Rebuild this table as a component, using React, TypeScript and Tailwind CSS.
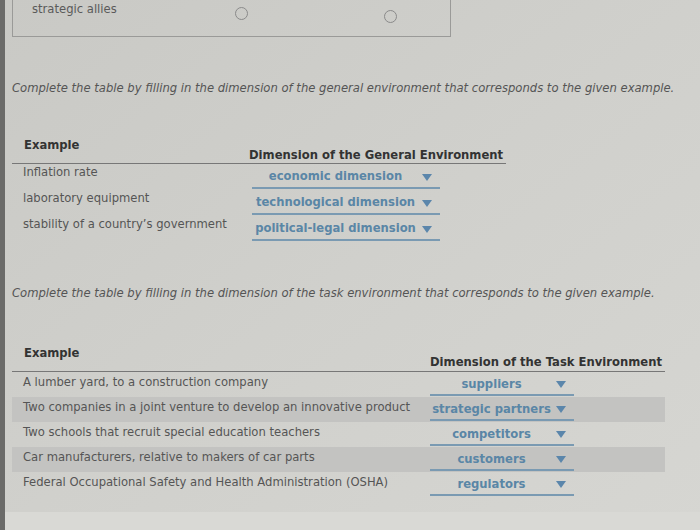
const generalRows = [
  { example: "Inflation rate", answer: "economic dimension" },
  { example: "laboratory equipment", answer: "technological dimension" },
  { example: "stability of a country’s government", answer: "political-legal dimension" },
];

const taskRows = [
  { example: "A lumber yard, to a construction company", answer: "suppliers" },
  { example: "Two companies in a joint venture to develop an innovative product", answer: "strategic partners" },
  { example: "Two schools that recruit special education teachers", answer: "competitors" },
  { example: "Car manufacturers, relative to makers of car parts", answer: "customers" },
  { example: "Federal Occupational Safety and Health Administration (OSHA)", answer: "regulators" },
];

const Caret = () => (
  <svg width="10" height="7" viewBox="0 0 10 7" className="shrink-0">
    <path d="M0 0 L10 0 L5 7 Z" fill="#5b86ab" />
  </svg>
);

const Dropdown = ({ value, width }: { value: string; width: string }) => (
  <div className={`flex items-center justify-between gap-[5px] border-b-2 border-[#7a9ab2] pb-[1px] pl-[2px] pr-2 ${width}`}>
    <span className="flex-1 text-center font-bold text-[#5a86a6]">{value}</span>
    <Caret />
  </div>
);

const App = () => {
  return (
    <div
      className="relative h-[530px] w-[700px] overflow-hidden whitespace-nowrap border-l-[5px] border-[#6b6b69] bg-gradient-to-br from-[#c9c9c5] via-[#d0d0cc] to-[#d6d6d2] text-[11.6px] text-[#555]"
      style={{ fontFamily: '"DejaVu Sans", Verdana, sans-serif' }}
    >
      <div className="ml-[7px] flex h-[37px] w-[439px] border border-t-0 border-[#9a9a98] pl-[19px]">
        <span className="mt-[1px] text-[#5a5a5a]">strategic allies</span>
        <div className="ml-[118px] mt-[7px] h-[13px] w-[13px] rounded-full border-[1.5px] border-[#8a8a8a]" />
        <div className="ml-[136px] mt-[10px] h-[13px] w-[13px] rounded-full border-[1.5px] border-[#8a8a8a]" />
      </div>

      <p className="ml-[7px] mt-[43px] italic text-[#555]">
        Complete the table by filling in the dimension of the general environment that corresponds to the given example.
      </p>

      <div className="ml-[7px] mt-[40px] w-[494px]">
        <div className="flex h-[27px] border-b border-[#777] pl-[12px]">
          <span className="w-[225px] font-bold text-[#333]">Example</span>
          <span className="mt-[10px] font-bold text-[#333]">Dimension of the General Environment</span>
        </div>
        {generalRows.map((row) => (
          <div key={row.example} className="flex h-[26px] pl-[11px]">
            <span className="w-[229px]">{row.example}</span>
            <div className="pt-[4px]">
              <Dropdown value={row.answer} width="w-[188px]" />
            </div>
          </div>
        ))}
      </div>

      <p className="ml-[7px] mt-[43px] italic text-[#555]">
        Complete the table by filling in the dimension of the task environment that corresponds to the given example.
      </p>

      <div className="ml-[7px] mt-[42px] w-[653px]">
        <div className="flex h-[27px] border-b border-[#777] pl-[12px]">
          <span className="w-[406px] font-bold text-[#333]">Example</span>
          <span className="mt-[9px] font-bold text-[#333]">Dimension of the Task Environment</span>
        </div>
        {taskRows.map((row, i) => (
          <div
            key={row.example}
            className={`flex h-[25px] pl-[11px] ${i % 2 === 1 ? "bg-[#c3c3c1]" : ""}`}
          >
            <span className="w-[407px] pt-[2px]">{row.example}</span>
            <div className="pt-[4px]">
              <Dropdown value={row.answer} width="w-[144px]" />
            </div>
          </div>
        ))}
      </div>

      <div className="absolute bottom-0 left-0 right-0 h-[18px] bg-[#d9d9d5]" />
    </div>
  );
};

export default App;
